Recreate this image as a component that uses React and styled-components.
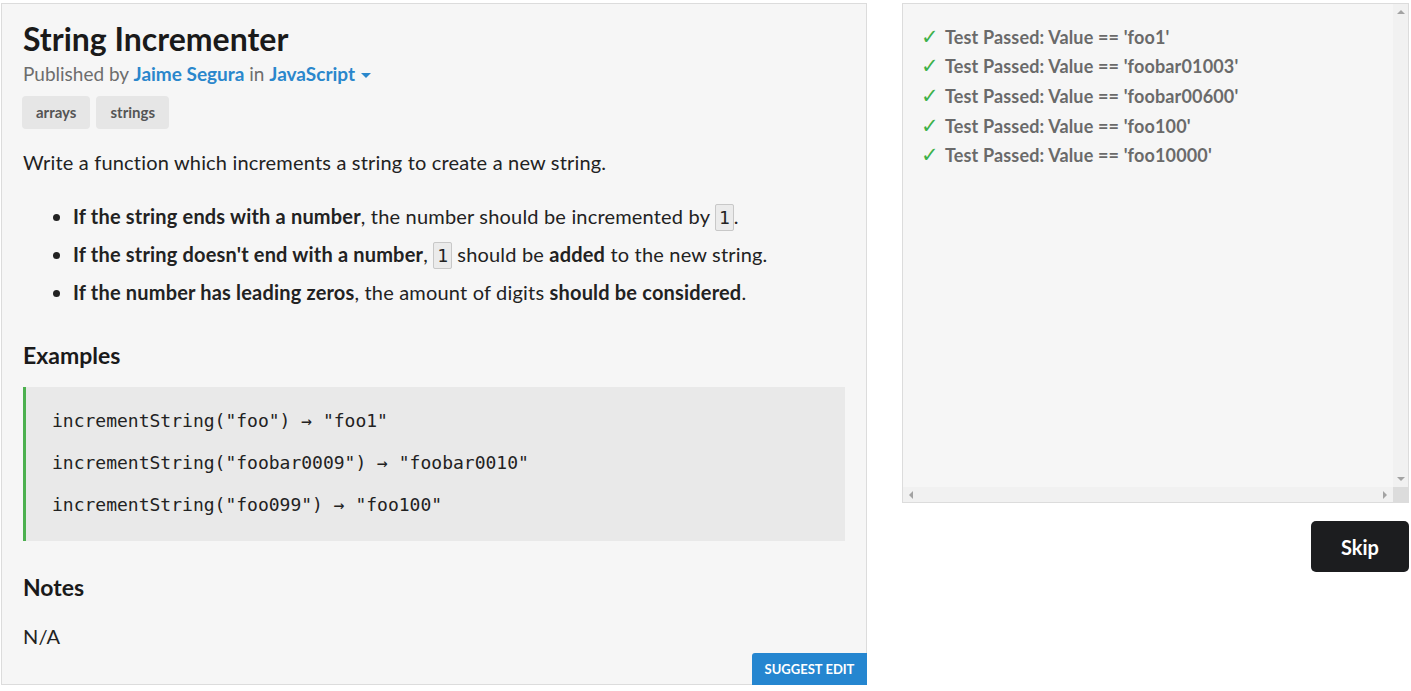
import React from "react";
import styled, { createGlobalStyle, css } from "styled-components";

const Global = createGlobalStyle`
  html, body { margin: 0; padding: 0; background: #fff; }
  body { font-family: Lato, "Noto Sans", sans-serif; }
`;

const Page = styled.div`
  display: flex;
  align-items: flex-start;
  gap: 35px;
  padding: 3px 2px 0 1px;
  height: 688px;
`;

const Description = styled.section`
  position: relative;
  box-sizing: border-box;
  width: 867px;
  height: 682px;
  background: #f6f6f6;
  border: 1px solid #dcdcdc;
  padding: 16px 21px 0 21px;
  color: #222;
`;

const Title = styled.h1`
  margin: 0;
  font-size: 32px;
  font-weight: 700;
  line-height: 38px;
  color: #1a1a1a;
`;

const Meta = styled.div`
  font-size: 19px;
  line-height: 28px;
  color: #6d6d6d;
  margin-top: 2px;
`;

const Link = styled.a`
  color: #2a87cc;
  font-weight: 700;
  text-decoration: none;
`;

const Caret = styled.span`
  display: inline-block;
  width: 0;
  height: 0;
  margin-left: 6px;
  vertical-align: 3px;
  border-left: 5px solid transparent;
  border-right: 5px solid transparent;
  border-top: 5px solid #2a87cc;
`;

const Tags = styled.div`
  display: flex;
  gap: 6px;
  margin-top: 8px;
  margin-left: -1px;
`;

const Tag = styled.span`
  background: #e6e6e6;
  color: #555;
  font-size: 15px;
  font-weight: 700;
  padding: 0 14px;
  height: 33px;
  line-height: 33px;
  border-radius: 4px;
`;

const bodyText = css`
  font-size: 20px;
  line-height: 30px;
  letter-spacing: 0.18px;
`;

const Para = styled.p`
  margin: 18px 0 0;
  ${bodyText}
`;

const List = styled.ul`
  margin: 24px 0 0;
  padding-left: 50px;
  ${bodyText}
  & > li + li { margin-top: 8px; }
`;

const Code = styled.code`
  font-family: "DejaVu Sans Mono", monospace;
  font-size: 18px;
  line-height: 18px;
  letter-spacing: 0;
  background: #ebebeb;
  border: 1px solid #c8c8c8;
  border-radius: 2px;
  padding: 2px 3px;
`;

const Heading = styled.h2`
  margin: ${(p) => p.$top}px 0 0;
  font-size: 23px;
  line-height: 30px;
  font-weight: 700;
  color: #1a1a1a;
`;

const Pre = styled.pre`
  margin: 17px 0 0;
  background: #e9e9e9;
  border-left: 3px solid #4cb04f;
  padding: 13px 26px 15px;
  font-family: "DejaVu Sans Mono", monospace;
  font-size: 18px;
  line-height: 42px;
  color: #222;
`;

const Plain = styled.p`
  margin: 19px 0 0;
  ${bodyText}
`;

const SuggestButton = styled.button`
  position: absolute;
  right: -1px;
  bottom: -1px;
  width: 115px;
  height: 32px;
  border: none;
  border-radius: 3px 0 0 0;
  background: #2586d0;
  color: #fff;
  font-family: Lato, sans-serif;
  font-size: 13px;
  font-weight: 700;
`;

const Side = styled.div`
  display: flex;
  flex-direction: column;
  align-items: flex-end;
  width: 507px;
`;

const Output = styled.div`
  box-sizing: border-box;
  width: 507px;
  height: 500px;
  background: #f6f6f6;
  border: 1px solid #dcdcdc;
  display: grid;
  grid-template-columns: 1fr 15px;
  grid-template-rows: 1fr 15px;
`;

const Results = styled.div`
  overflow: hidden;
  padding: 18px 18px;
`;

const VBar = styled.div`
  background: #f1f1f1;
  display: flex;
  flex-direction: column;
  justify-content: space-between;
  align-items: center;
  padding: 6px 0;
`;

const HBar = styled.div`
  background: #f1f1f1;
  display: flex;
  justify-content: space-between;
  align-items: center;
  padding: 0 6px;
`;

const Corner = styled.div`
  background: #dcdcdc;
`;

const Arrow = styled.span`
  width: 0;
  height: 0;
  ${(p) =>
    p.$dir === "up" &&
    css`
      border-left: 4px solid transparent;
      border-right: 4px solid transparent;
      border-bottom: 4px solid #a3a3a3;
    `}
  ${(p) =>
    p.$dir === "down" &&
    css`
      border-left: 4px solid transparent;
      border-right: 4px solid transparent;
      border-top: 4px solid #a3a3a3;
    `}
  ${(p) =>
    p.$dir === "left" &&
    css`
      border-top: 4px solid transparent;
      border-bottom: 4px solid transparent;
      border-right: 4px solid #a3a3a3;
    `}
  ${(p) =>
    p.$dir === "right" &&
    css`
      border-top: 4px solid transparent;
      border-bottom: 4px solid transparent;
      border-left: 4px solid #a3a3a3;
    `}
`;

const TestLine = styled.div`
  display: flex;
  align-items: center;
  gap: 6px;
  height: 29.6px;
  font-size: 18px;
  font-weight: 700;
  letter-spacing: 0.15px;
  color: #6a6a6a;
  white-space: nowrap;
`;

const Check = styled.span`
  color: #3db14a;
  font-family: "DejaVu Sans", sans-serif;
  font-size: 21px;
  font-weight: 700;
  width: 18px;
`;

const SkipButton = styled.button`
  margin-top: 18px;
  width: 98px;
  height: 51px;
  border: none;
  border-radius: 5px;
  background: #1c1d1f;
  color: #fff;
  font-family: Lato, sans-serif;
  font-size: 20px;
  font-weight: 700;
`;

const tests = ["foo1", "foobar01003", "foobar00600", "foo100", "foo10000"];

export default function App() {
  return (
    <>
      <Global />
      <Page>
        <Description>
          <Title>String Incrementer</Title>
          <Meta>
            Published by <Link>Jaime Segura</Link> in <Link>JavaScript</Link>
            <Caret />
          </Meta>
          <Tags>
            <Tag>arrays</Tag>
            <Tag>strings</Tag>
          </Tags>
          <Para>Write a function which increments a string to create a new string.</Para>
          <List>
            <li>
              <b>If the string ends with a number</b>, the number should be incremented by <Code>1</Code>.
            </li>
            <li>
              <b>If the string doesn't end with a number</b>, <Code>1</Code> should be <b>added</b> to the new string.
            </li>
            <li>
              <b>If the number has leading zeros</b>, the amount of digits <b>should be considered</b>.
            </li>
          </List>
          <Heading $top={33}>Examples</Heading>
          <Pre>
            {`incrementString("foo") → "foo1"
incrementString("foobar0009") → "foobar0010"
incrementString("foo099") → "foo100"`}
          </Pre>
          <Heading $top={31}>Notes</Heading>
          <Plain>N/A</Plain>
          <SuggestButton>SUGGEST EDIT</SuggestButton>
        </Description>
        <Side>
          <Output>
            <Results>
              {tests.map((t) => (
                <TestLine key={t}>
                  <Check>✓</Check>
                  Test Passed: Value == '{t}'
                </TestLine>
              ))}
            </Results>
            <VBar>
              <Arrow $dir="up" />
              <Arrow $dir="down" />
            </VBar>
            <HBar>
              <Arrow $dir="left" />
              <Arrow $dir="right" />
            </HBar>
            <Corner />
          </Output>
          <SkipButton>Skip</SkipButton>
        </Side>
      </Page>
    </>
  );
}
